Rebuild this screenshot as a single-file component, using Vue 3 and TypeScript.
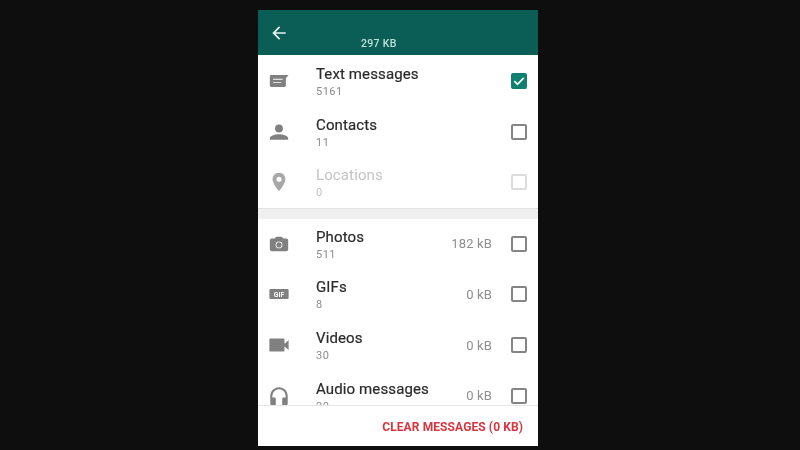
<script setup lang="ts">
type Row = { title: string; sub: string; size?: string; icon: string; checked?: boolean; disabled?: boolean; cut?: boolean }
const first: Row[] = [
  { title: 'Text messages', sub: '5161', icon: 'msg', checked: true },
  { title: 'Contacts', sub: '11', icon: 'person' },
  { title: 'Locations', sub: '0', icon: 'place', disabled: true },
]
const second: Row[] = [
  { title: 'Photos', sub: '511', size: '182 kB', icon: 'camera' },
  { title: 'GIFs', sub: '8', size: '0 kB', icon: 'gif' },
  { title: 'Videos', sub: '30', size: '0 kB', icon: 'video' },
  { title: 'Audio messages', sub: '20', size: '0 kB', icon: 'audio' },
]
const sections: Row[][] = [first, second]
</script>

<template>
  <div class="page">
    <div class="phone">
      <header class="head">
        <svg class="back" viewBox="0 0 24 24" width="20" height="20">
          <path d="M20 11H7.800l5.600-5.600L12 4l-8 8 8 8 1.400-1.400L7.800 13H20z" fill="#e8f3f0" />
        </svg>
        <span class="total">297 KB</span>
      </header>
      <main class="list">
        <section v-for="(sec, i) in sections" :key="i" class="sec">
          <div v-for="r in sec" :key="r.title" class="row" :class="{ off: r.disabled }">
            <div class="ic">
              <svg viewBox="0 0 24 24" width="22" height="22" fill="#808080">
                <template v-if="r.icon === 'msg'">
                  <path fill-rule="evenodd" d="M3.500 5.500H22.500l-3 3.500v8a1.500 1.500 0 0 1-1.500 1.500H3.500A1.500 1.500 0 0 1 2 17V7a1.500 1.500 0 0 1 1.500-1.500zM5.500 9.500v1h10.500v-1zM5.500 13v1h9v-1z" />
                </template>
                <path v-else-if="r.icon === 'person'" d="M12 12.500a4.300 4.300 0 1 0 0-8.600 4.300 4.300 0 0 0 0 8.600zm0 2c-3.400 0-10 1.500-10 4.200V20.500h20v-1.800c0-2.700-6.600-4.200-10-4.200z" />
                <path v-else-if="r.icon === 'place'" d="M12 2C8.100 2 5 5.100 5 9c0 5.200 7 13 7 13s7-7.800 7-13c0-3.900-3.100-7-7-7zm0 9.800a2.800 2.800 0 1 1 0-5.600 2.800 2.800 0 0 1 0 5.600z" fill="#a8a8a8" />
                <template v-else-if="r.icon === 'camera'">
                  <path fill-rule="evenodd" d="M9 4 7.200 6H4a2 2 0 0 0-2 2v10a2 2 0 0 0 2 2h16a2 2 0 0 0 2-2V8a2 2 0 0 0-2-2h-3.200L15 4zM12 9.300a3.700 3.700 0 1 1 0 7.400 3.700 3.700 0 0 1 0-7.400z" />
                  <circle cx="12" cy="13" r="2.800" />
                </template>
                <template v-else-if="r.icon === 'gif'">
                  <rect x="1.500" y="6.500" width="21" height="11" rx="1.500" />
                  <text x="12" y="14.800" text-anchor="middle" class="gif">GIF</text>
                </template>
                <path v-else-if="r.icon === 'video'" d="M18 10.500V6a1 1 0 0 0-1-1H2.500a1 1 0 0 0-1 1v12a1 1 0 0 0 1 1H17a1 1 0 0 0 1-1v-4.500l4.500 4v-11z" />
                <path v-else-if="r.icon === 'audio'" d="M12 2.500C6.800 2.500 2.500 6.800 2.500 12v8a2.500 2.500 0 0 0 2.500 2.500h2a1.500 1.500 0 0 0 1.500-1.500v-6A1.500 1.500 0 0 0 7 13.500H4.700V12a7.300 7.300 0 0 1 14.600 0v1.500H17a1.500 1.500 0 0 0-1.500 1.500v6a1.500 1.500 0 0 0 1.500 1.500h2a2.500 2.500 0 0 0 2.500-2.500v-8c0-5.200-4.300-9.500-9.500-9.500z" />
              </svg>
            </div>
            <div class="main">
              <div class="title">{{ r.title }}</div>
              <div class="sub">{{ r.sub }}</div>
            </div>
            <div v-if="r.size" class="size">{{ r.size }}</div>
            <div class="box" :class="{ on: r.checked }">
              <svg v-if="r.checked" viewBox="0 0 16 16" width="16" height="16">
                <path d="M3.300 8.200 6.500 11.300 12.800 4.800" fill="none" stroke="#fff" stroke-width="1.700" />
              </svg>
            </div>
          </div>
        </section>
      </main>
      <footer class="foot">CLEAR MESSAGES (0 KB)</footer>
    </div>
  </div>
</template>

<style>
body { margin: 0; background: #0e0e0e; }
</style>

<style scoped>
.page {
  width: 800px;
  height: 450px;
  box-sizing: border-box;
  padding: 10px 0 0 258px;
  background: #0e0e0e;
  overflow: hidden;
  font-family: Roboto, "Liberation Sans", sans-serif;
}
.phone {
  width: 280px;
  height: 436px;
  display: flex;
  flex-direction: column;
  background: #fff;
  filter: blur(0.55px);
}
.head {
  height: 45px;
  flex: none;
  display: flex;
  align-items: flex-start;
  background: #0b5e55;
  position: relative;
}
.back { margin: 13px 0 0 11px; }
.total {
  position: absolute;
  left: 103px;
  top: 27px;
  font-size: 10.5px;
  font-weight: 500;
  letter-spacing: 0.3px;
  color: #bfe0d9;
}
.list { flex: 1; min-height: 0; overflow: hidden; }
.sec:first-child { padding-top: 0.8px; }
.sec + .sec {
  border-top: 1px solid #e2e2e2;
  padding-top: 10px;
  background: linear-gradient(#efefef 10px, #fff 10px);
}
.row {
  height: 50.6px;
  display: flex;
  align-items: center;
  background: #fff;
  position: relative;
}
.ic {
  width: 58px;
  flex: none;
  display: flex;
  padding-left: 10px;
  box-sizing: border-box;
}
.gif {
  font-size: 7.500px;
  font-weight: 700;
  fill: #fff;
}
.main { flex: 1; min-width: 0; padding-top: 2px; }
.title {
  font-size: 15px;
  line-height: 18px;
  letter-spacing: 0.12px;
  -webkit-text-stroke: 0.2px #2b2b2b;
  color: #2b2b2b;
}
.off .title { -webkit-text-stroke: 0; }
.sub {
  margin-top: 2px;
  font-size: 11px;
  line-height: 14px;
  letter-spacing: 0.5px;
  color: #8c8c8c;
}
.size {
  font-size: 13px;
  letter-spacing: 0.15px;
  color: #8f8f8f;
  margin-right: 19px;
}
.box {
  width: 16px;
  height: 16px;
  flex: none;
  margin-right: 11px;
  box-sizing: border-box;
  border: 2px solid #858585;
  border-radius: 2px;
  display: flex;
  align-items: center;
  justify-content: center;
}
.box svg { flex: none; }
.box.on { background: #0f7f71; border-color: #0f7f71; }
.off .title, .off .sub { color: #c4c4c4; }
.off .box { border-color: #dcdcdc; }
.foot {
  height: 41px;
  flex: none;
  box-sizing: border-box;
  border-top: 1px solid #e6e6e6;
  background: #fff;
  display: flex;
  align-items: center;
  justify-content: flex-end;
  padding: 1px 15px 0 0;
  font-size: 12px;
  font-weight: 700;
  letter-spacing: 0.1px;
  color: #d9343f;
}
</style>
